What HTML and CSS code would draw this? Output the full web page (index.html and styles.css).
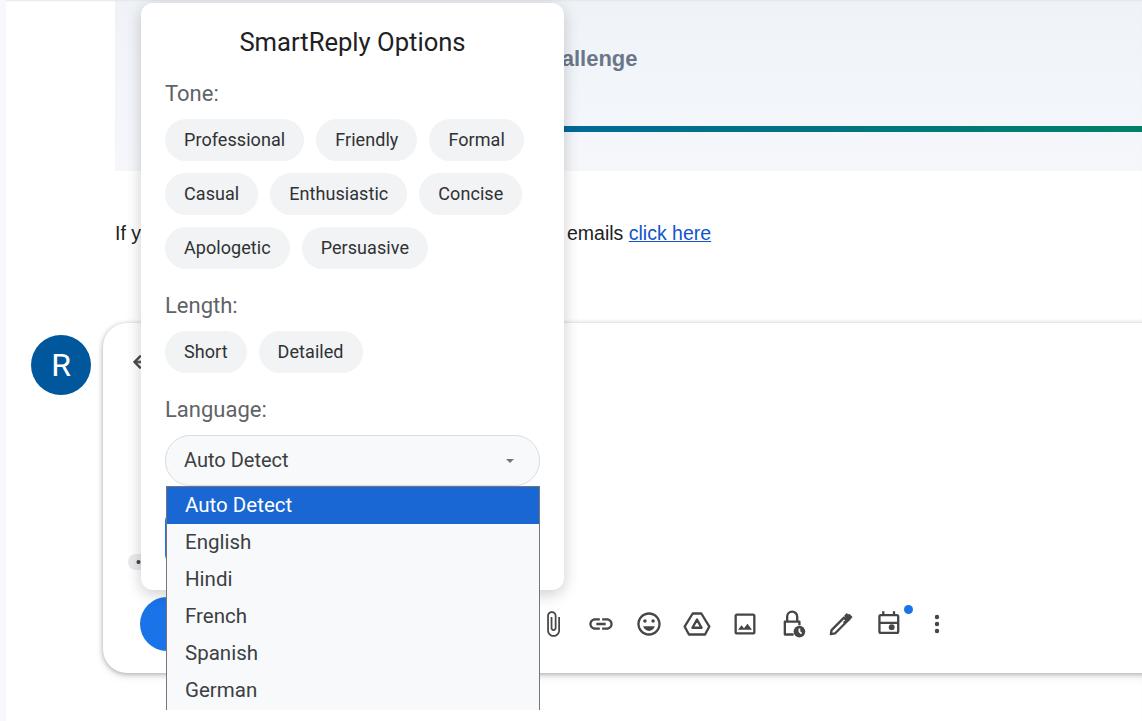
FILE: index.html
```html
<!DOCTYPE html>
<html lang="en">
<head>
  <meta charset="UTF-8" />
  <title>SmartReply Options</title>
  <link rel="stylesheet" href="styles.css">
</head>
<body>

  <div class="mail">
    <div class="banner">
      <h2 class="banner-title">Weekly Coding Challenge</h2>
      <div class="banner-bar"></div>
    </div>

    <p class="footer-note">If you no longer want to receive these weekly digest emails <a href="#">click here</a></p>

    <div class="reply-row">
      <div class="avatar">R</div>
      <div class="reply-card">
        <svg class="reply-arrow" viewBox="0 0 24 24"><path d="M20 11H7.83l5.59-5.59L12 4l-8 8 8 8 1.41-1.41L7.83 13H20v-2z"/></svg>
        <div class="trim-pill">•••</div>
        <div class="toolbar">
          <button class="send-btn">Send</button>
          <div class="tool-icons">
            <!-- attach -->
            <span class="tool"><svg viewBox="0 0 24 24"><path d="M16.5 6v11.5c0 2.21-1.79 4-4 4s-4-1.79-4-4V5c0-1.38 1.12-2.5 2.5-2.5s2.5 1.12 2.5 2.5v10.5c0 .55-.45 1-1 1s-1-.45-1-1V6H10v9.5c0 1.38 1.12 2.5 2.5 2.5s2.5-1.12 2.5-2.5V5c0-2.21-1.79-4-4-4S7 2.79 7 5v12.5c0 3.04 2.46 5.5 5.5 5.5s5.5-2.46 5.5-5.5V6h-1.5z"/></svg></span>
            <!-- link -->
            <span class="tool"><svg viewBox="0 0 24 24"><path d="M3.9 12c0-1.71 1.39-3.1 3.1-3.1h4V7H7c-2.76 0-5 2.24-5 5s2.24 5 5 5h4v-1.9H7c-1.71 0-3.1-1.39-3.1-3.1zM8 13h8v-2H8v2zm9-6h-4v1.9h4c1.71 0 3.1 1.39 3.1 3.1s-1.39 3.1-3.1 3.1h-4V17h4c2.76 0 5-2.24 5-5s-2.24-5-5-5z"/></svg></span>
            <!-- emoji -->
            <span class="tool"><svg viewBox="0 0 24 24"><path d="M11.99 2C6.47 2 2 6.48 2 12s4.47 10 9.99 10C17.52 22 22 17.52 22 12S17.52 2 11.99 2zM12 20c-4.42 0-8-3.58-8-8s3.58-8 8-8 8 3.58 8 8-3.58 8-8 8z"/><circle cx="8.5" cy="9.5" r="1.5"/><circle cx="15.5" cy="9.5" r="1.5"/><path d="M12 18c2.28 0 4.22-1.66 5-4H7c.78 2.34 2.72 4 5 4z"/></svg></span>
            <!-- drive -->
            <span class="tool"><svg viewBox="0 0 24 24"><path class="line" d="M8.3 3h7.400l6.900 11.200-3.700 6.800H5.100l-3.700-6.800z"/><path class="line" d="M12 8.200l3.900 7H8.100z"/></svg></span>
            <!-- image -->
            <span class="tool"><svg viewBox="0 0 24 24"><path d="M19 5v14H5V5h14m0-2H5c-1.1 0-2 .9-2 2v14c0 1.1.9 2 2 2h14c1.1 0 2-.9 2-2V5c0-1.1-.9-2-2-2zm-4.86 8.86l-3 3.87L9 13.14 6 17h12l-3.86-5.14z"/></svg></span>
            <!-- confidential -->
            <span class="tool"><svg viewBox="0 0 24 24"><path class="line" d="M12.500 21H5V10h12.500v3"/><path class="line" d="M7 10V5.700a4.300 4.300 0 0 1 8.600 0V10"/><circle cx="17.500" cy="18.500" r="5"/><path class="hand" d="M17.500 15.800v2.700l1.800 1.800"/></svg></span>
            <!-- signature pen -->
            <span class="tool"><svg viewBox="0 0 24 24"><path class="line" d="M3.300 20.700l.6-3.500L14.600 6.500l2.900 2.900L6.800 20.100z"/><path d="M14.800 4.700l2.100-2.100 1.300 1.300.9-.7 2.800 2.800-3.200 3.900-1.200-1.100-2.800 2.700-1-1 2.800-2.800z"/></svg></span>
            <!-- calendar -->
            <span class="tool tool-badge"><svg viewBox="0 0 24 24"><rect class="line" x="3.800" y="4.400" width="16.100" height="15.200" rx="1.200"/><path class="line" d="M7.100 1v3.400M16.300 1v3.400M3.800 11h16.100"/><circle cx="14.300" cy="14.700" r="2.500"/></svg></span>
            <!-- more -->
            <span class="tool"><svg viewBox="0 0 24 24"><circle cx="12" cy="6" r="1.900"/><circle cx="12" cy="12" r="1.900"/><circle cx="12" cy="18" r="1.900"/></svg></span>
          </div>
        </div>
      </div>
    </div>
  </div>

  <div class="popup">
    <h3 class="popup-title">SmartReply Options</h3>

    <div class="section">
      <div class="section-label">Tone:</div>
      <div class="chips">
        <span class="chip">Professional</span>
        <span class="chip">Friendly</span>
        <span class="chip">Formal</span>
        <span class="chip">Casual</span>
        <span class="chip">Enthusiastic</span>
        <span class="chip">Concise</span>
        <span class="chip">Apologetic</span>
        <span class="chip">Persuasive</span>
      </div>
    </div>

    <div class="section">
      <div class="section-label">Length:</div>
      <div class="chips">
        <span class="chip">Short</span>
        <span class="chip">Detailed</span>
      </div>
    </div>

    <div class="section">
      <div class="section-label">Language:</div>
      <div class="select">
        Auto Detect
        <span class="caret"></span>
      </div>
    </div>

    <button class="generate-btn">Generate Reply</button>

    <ul class="options">
      <li class="selected">Auto Detect</li>
      <li>English</li>
      <li>Hindi</li>
      <li>French</li>
      <li>Spanish</li>
      <li>German</li>
    </ul>
  </div>

</body>
</html>
```

FILE: styles.css
```css
* {
  box-sizing: border-box;
}

html, body {
  height: 721px;
  margin: 0;
  overflow: hidden;
}

body {
  background: #f6f8fc;
  font-family: 'Liberation Sans', Arial, sans-serif;
  padding-left: 6px;
}

.mail {
  background: white;
  height: 721px;
  box-shadow: inset 0 2px 2px -1px #e3e6ea;
}

.banner {
  margin-left: 109px;
  height: 171px;
  padding-top: 47px;
  background: linear-gradient(to bottom, #eff3f8, #f5f7fb);
  box-shadow: inset 0 2px 2px -1px #e3e6ea;
}

.banner-title {
  margin: 0;
  padding-left: 254px;
  font-size: 22px;
  line-height: 24px;
  color: #6b7789;
}

.banner-bar {
  height: 6px;
  margin: 55px 0 0 60px;
  background: linear-gradient(to right, #005ab4, #008069);
}

.footer-note {
  margin: 49px 0 0 109px;
  font-size: 19.5px;
  line-height: 26px;
  color: #202124;
  height: 103px;
}

.footer-note a {
  color: #1155cc;
}

.reply-row {
  display: flex;
  gap: 12px;
  margin-left: 25px;
  margin-right: -40px;
}

.avatar {
  width: 60px;
  height: 60px;
  margin-top: 12px;
  border-radius: 50%;
  background: #01579b;
  color: white;
  font-family: Roboto, sans-serif;
  font-size: 32px;
  line-height: 60px;
  text-align: center;
  flex-shrink: 0;
}

.reply-card {
  flex: 1;
  height: 350px;
  display: flex;
  flex-direction: column;
  background: white;
  border-radius: 24px;
  box-shadow: 0 1px 5px rgba(0, 0, 0, 0.3), 0 4px 10px rgba(0, 0, 0, 0.08);
}

.reply-arrow {
  width: 20px;
  height: 20px;
  margin: 29px 0 0 27px;
  fill: #444746;
  stroke: #444746;
  stroke-width: 1;
}

.trim-pill {
  width: 30px;
  height: 16px;
  margin: auto 0 27px 25px;
  border-radius: 8px;
  background: #e8eaed;
  color: #444746;
  font-size: 14px;
  line-height: 16px;
  padding-left: 8px;
}

.toolbar {
  display: flex;
  align-items: center;
  height: 54px;
  margin-bottom: 22px;
  padding-left: 37px;
}

.send-btn {
  width: 110px;
  height: 54px;
  margin-right: 279px;
  border: none;
  border-radius: 27px;
  background: #1a73e8;
  color: white;
  font-size: 16px;
}

.tool-icons {
  display: flex;
}

.tool {
  position: relative;
  width: 48px;
  height: 48px;
  display: flex;
  align-items: center;
  justify-content: center;
}

.tool svg {
  width: 28px;
  height: 28px;
  fill: #444746;
}

.tool .line {
  fill: none;
  stroke: #444746;
  stroke-width: 2;
  stroke-linejoin: round;
}

.tool .hand {
  fill: none;
  stroke: white;
  stroke-width: 1.500;
}

.tool-badge::after {
  content: "";
  position: absolute;
  top: 5px;
  right: 0;
  width: 9px;
  height: 9px;
  border-radius: 50%;
  background: #1a73e8;
}

/* popup over the mail */
.popup {
  position: absolute;
  top: 3px;
  left: 141px;
  width: 423px;
  height: 587px;
  padding: 24px;
  background: white;
  border-radius: 12px;
  box-shadow: 0 4px 16px rgba(0, 0, 0, 0.2);
  font-family: Roboto, sans-serif;
}

.popup-title {
  margin: 0 0 25px;
  text-align: center;
  font-size: 25.6px;
  font-weight: 400;
  line-height: 30px;
  color: #202124;
}

.section {
  margin-bottom: 25px;
}

.section-label {
  height: 22px;
  margin-bottom: 15px;
  font-size: 22px;
  line-height: 24px;
  color: #5f6368;
}

.chips {
  display: flex;
  flex-wrap: wrap;
  gap: 12px;
}

.chip {
  height: 42px;
  padding: 0 19px;
  border-radius: 21px;
  background: #f1f3f4;
  font-size: 18px;
  letter-spacing: 0.06px;
  line-height: 42px;
  color: #303134;
}

.select {
  position: relative;
  height: 51px;
  padding-left: 18px;
  border: 1px solid #dadce0;
  border-radius: 25px;
  background: #f8f9fa;
  font-size: 20px;
  line-height: 49px;
  color: #3c4043;
}

.caret {
  position: absolute;
  top: 23px;
  right: 25px;
  border-left: 4px solid transparent;
  border-right: 4px solid transparent;
  border-top: 4px solid #70757a;
}

.generate-btn {
  display: block;
  width: 100%;
  height: 50px;
  margin-top: 27px;
  border: none;
  border-radius: 8px;
  background: #1a73e8;
  color: white;
  font-size: 18px;
}

.options {
  position: absolute;
  top: 483px;
  left: 25px;
  width: 374px;
  height: 224px;
  margin: 0;
  padding: 0;
  list-style: none;
  overflow: hidden;
  background: #f8f9fb;
  border: 1px solid #767676;
  border-bottom: none;
  font-size: 20.5px;
  color: #3c4043;
}

.options li {
  height: 37px;
  padding-left: 18px;
  line-height: 37px;
}

.options .selected {
  background: #1967d2;
  color: white;
}
```
